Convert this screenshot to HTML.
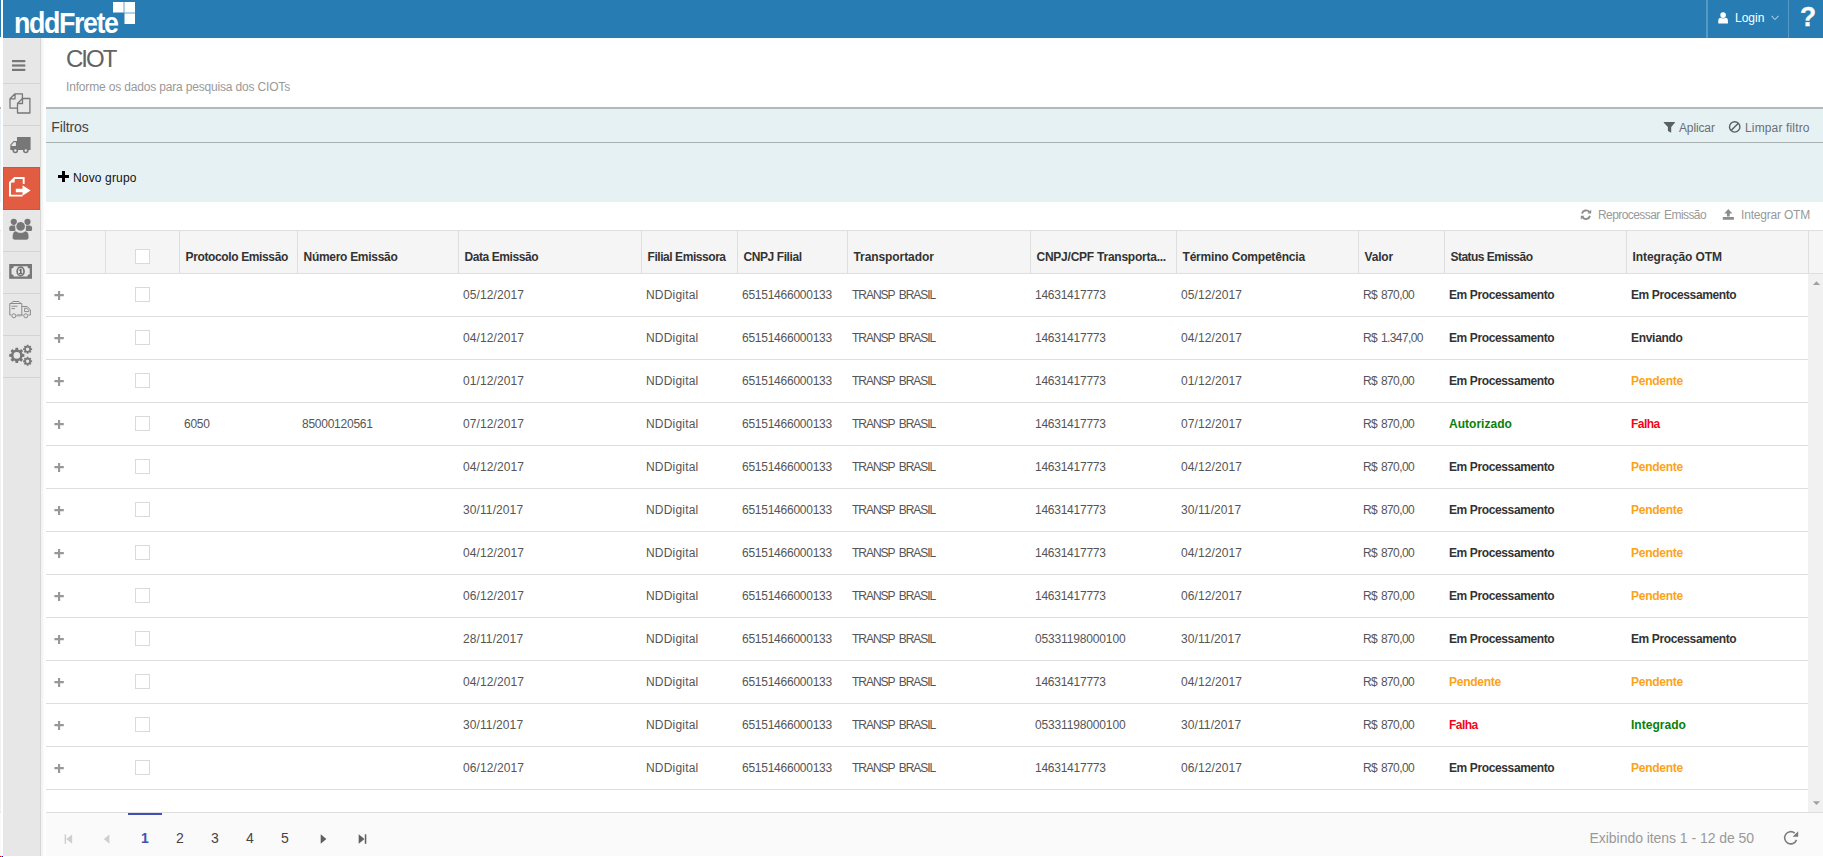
<!DOCTYPE html>
<html lang="pt-BR">
<head>
<meta charset="utf-8">
<title>nddFrete - CIOT</title>
<style>
*{box-sizing:border-box}
html,body{margin:0;padding:0}
body{width:1823px;height:857px;overflow:hidden;background:#fff;font-family:"Liberation Sans",sans-serif;font-size:12px;color:#555;position:relative}
.abs{position:absolute}
#edge{left:0;top:0;width:1px;height:857px;background:linear-gradient(to bottom,#277db3 0,#277db3 37px,#fff 37px,#fff 107px,#b4b8b9 107px,#b4b8b9 109px,#e6f1f4 109px,#e6f1f4 202px,#fff 202px,#fff 230px,#dedede 230px,#dedede 231px,#f5f5f5 231px,#f5f5f5 273px,#dedede 273px,#dedede 274px,#f1f1f1 274px,#f1f1f1 812px,#dedede 812px,#dedede 813px,#fafafa 813px,#fafafa 856px,#fff 856px)}
#topbar{left:3px;top:0;width:1820px;height:38px;background:#277db3}
#logo{left:11.4px;top:6px;font-size:29px;font-weight:bold;color:#fff;letter-spacing:-1.5px;line-height:34px;white-space:nowrap;transform:scaleX(.925);transform-origin:0 0}
#sq{left:110px;top:2px}
.tdiv{top:0;width:1px;height:38px;background:rgba(255,255,255,.22)}
#login{left:1732px;top:1px;line-height:35px;color:#fff;font-size:12px}
#help{left:1792px;top:0;width:26px;text-align:center;color:#fff;font-weight:bold;font-size:28px;line-height:33px;transform:scaleX(.94);-webkit-text-stroke:.35px #fff}
#side{left:3px;top:38px;width:38px;height:818px;background:#e7e7e7;border-right:1px solid #d5d7d3}
.sd{position:absolute;left:0;width:37px;height:1px;background:#d3d5d1}
#sact{left:0;top:129px;width:37px;height:43px;background:#e25c41;border:1px solid #e34f2e}
#sicons{left:0;top:0}
#shadow{left:41px;top:38px;width:4px;height:818px;background:linear-gradient(to right,rgba(0,0,0,.055),rgba(0,0,0,0))}
h1{margin:0;font-weight:normal;font-size:24px;color:#636363;left:66px;top:45px;line-height:28px;letter-spacing:-2px}
#sub{left:66px;top:79px;color:#999;font-size:12px;line-height:16px;white-space:nowrap;letter-spacing:-.17px}
#filt{left:46px;top:107px;width:1777px;height:95px;background:#e6f1f4;border-top:2px solid #b4b8b9}
#filthead{left:0;top:0;width:100%;height:34px;border-bottom:1px solid #a9b0b2}
#filtt{left:5.3px;top:9px;font-size:14px;color:#444;line-height:18px;letter-spacing:-.12px}
.fbtn{top:11px;font-size:12px;color:#6a7072;line-height:16px;white-space:nowrap}
#novo{left:27px;top:61px;color:#111;font-size:12px;line-height:16px;white-space:nowrap;letter-spacing:.15px}
.tb{top:207px;color:#999;font-size:12px;line-height:16px;white-space:nowrap}
#grid{left:46px;top:230px;width:1777px;height:582px;border-top:1px solid #dedede}
#ghead{left:0;top:0;width:1777px;height:43px;background:#f5f5f5;border-bottom:1px solid #dedede}
table{border-collapse:separate;border-spacing:0;table-layout:fixed;width:1762px}
th{height:42px;padding:9px 0 0 5.5px;text-align:left;font-weight:bold;font-size:12px;color:#333;border-left:1px solid #dedede;white-space:nowrap;overflow:hidden}
th:first-child{border-left:0}
td{height:43px;padding:0 0 0 5px;font-size:12px;color:#555;border-bottom:1px solid #dedede;white-space:nowrap;overflow:hidden}
td.st{font-weight:bold;color:#333}
td.pen{color:#fba31a}
td.err{color:#f4051a}
td.ok{color:#0a800a}

th:nth-child(3){letter-spacing:-.37px}th:nth-child(4){letter-spacing:-.29px}th:nth-child(5){letter-spacing:-.43px}
th:nth-child(6){letter-spacing:-.44px}th:nth-child(7){letter-spacing:-.42px}th:nth-child(8){letter-spacing:-.08px}
th:nth-child(9){letter-spacing:-.24px}th:nth-child(10){letter-spacing:-.19px}th:nth-child(11){letter-spacing:-.16px}
th:nth-child(12){letter-spacing:-.53px}th:nth-child(13){letter-spacing:-.09px}
td:nth-child(3),td:nth-child(4),td:nth-child(7),td:nth-child(9){letter-spacing:-.25px}
td:nth-child(8){letter-spacing:-1.02px;word-spacing:2px}td:nth-child(11){letter-spacing:-.62px;word-spacing:1.2px}
td:nth-child(5),td:nth-child(10){letter-spacing:.1px}td:nth-child(6){letter-spacing:.2px}
td.w{letter-spacing:-.15px}
td.st{letter-spacing:-.38px}
td.l1{letter-spacing:-.3px}td.l2{letter-spacing:-.25px}td.l3{letter-spacing:.02px}td.l4{letter-spacing:-.55px}
.cb{position:absolute;left:30px;top:13px;width:15px;height:15px;border:1px solid #dadada;background:#fff}
td.ck,th.ck{position:relative}
th .cb{left:29px;top:18px}
#gbody{left:0;top:43px;width:1762px}
#scroll{left:1762px;top:43px;width:15px;height:538px;background:#f1f1f1}
#pager{left:46px;top:812px;width:1777px;height:44px;background:#fafafa;border-top:1px solid #dedede}
.pn{position:absolute;top:15.5px;width:34px;text-align:center;font-size:14px;color:#444;line-height:18px}
.pn.cur{color:#3f51b5;font-weight:bold}
#curbar{left:82px;top:0;width:34px;height:2px;background:#3f51b5}
#pinfo{right:69px;top:16px;font-size:14px;color:#999;line-height:18px;white-space:nowrap;letter-spacing:-.05px}
</style>
</head>
<body>
<div id="edge" class="abs"></div>
<div class="abs" style="left:0;top:856px;width:1px;height:1px;background:#f00"></div><div class="abs" style="left:1px;top:856px;width:1px;height:1px;background:#0f0"></div><div class="abs" style="left:2px;top:856px;width:1px;height:1px;background:#00f"></div>
<div id="topbar" class="abs">
  <div id="logo" class="abs">nddFrete</div>
  <svg id="sq" class="abs" width="24" height="24" viewBox="0 0 24 24"><rect x="0" y="0" width="10.5" height="10.5" fill="#fff"/><rect x="11.5" y="0" width="10.5" height="10.5" fill="#fff"/><rect x="11.5" y="11.5" width="10.5" height="10.5" fill="#fff"/><rect x="10.5" y="0" width="1" height="10.5" fill="#cfe3ef"/><rect x="11.5" y="10.5" width="10.5" height="1" fill="#cfe3ef"/></svg>
  <div class="abs tdiv" style="left:1703px;width:2px"></div>
  <div class="abs tdiv" style="left:1785px"></div>
  <svg class="abs" style="left:1714.8px;top:12.3px" width="10.2" height="11.5" viewBox="0 0 11 12" preserveAspectRatio="none"><circle cx="5.5" cy="3.2" r="3" fill="#fff"/><path d="M0.3 12 V9 Q0.3 6.2 3 6 Q5.5 7.6 8 6 Q10.7 6.2 10.7 9 V12 Z" fill="#fff"/></svg>
  <div id="login" class="abs">Login</div>
  <svg class="abs" style="left:1767.6px;top:15.3px" width="8" height="6" viewBox="0 0 8 6"><path d="M0.5 0.8 L4 4.6 L7.5 0.8" fill="none" stroke="#d5e6f1" stroke-width="1"/></svg>
  <div id="help" class="abs">?</div>
</div>
<div id="side" class="abs">
  <div class="sd" style="top:45px"></div>
  <div class="sd" style="top:87px"></div>
  <div class="sd" style="top:129px"></div>
  <div class="sd" style="top:171px"></div>
  <div class="sd" style="top:213px"></div>
  <div class="sd" style="top:255px"></div>
  <div class="sd" style="top:297px"></div>
  <div class="sd" style="top:339px"></div>
  <div id="sact" class="abs"></div>
  <svg id="sicons" class="abs" width="38" height="342" viewBox="3 38 38 342">
    <g fill="#777">
      <rect x="12" y="60" width="13.3" height="2.2"/><rect x="12" y="64.4" width="13.3" height="2.2"/><rect x="12" y="68.8" width="13.3" height="2.2"/>
    </g>
    <g fill="none" stroke="#777" stroke-width="1.3" stroke-linejoin="round">
      <path d="M15 93.8 H22.4 V108.2 H10 V98.8 Z M15 93.8 V98.8 H10"/>
      <path d="M22.5 98.5 H29.9 V113 H17.5 V103.5 Z" fill="#e7e7e7"/><path d="M22.5 98.5 V103.5 H17.5"/>
    </g>
    <g fill="#777">
      <path d="M17 137 H30.6 V150 H10.3 V144.8 L13.6 141.1 H17 Z M15.9 142.2 H14 L11.5 145 V146 H15.9 Z"/>
      <circle cx="15.3" cy="150.5" r="2.8"/><circle cx="25.8" cy="150.5" r="2.8"/>
    </g>
    <circle cx="15.3" cy="150.5" r="1.2" fill="#e7e7e7"/><circle cx="25.8" cy="150.5" r="1.2" fill="#e7e7e7"/>
    <g fill="none" stroke="#fff" stroke-width="1.9">
      <path d="M23.7 184 V178 H14.6 L10 182.6 V195.6 H22.6"/>
    </g>
    <path d="M14.6 178 V182.6 H10 Z" fill="#fff"/>
    <path d="M15.8 188.8 H22.5 V185.2 L30.6 190.5 L22.5 195.8 V192.2 H15.8 Z" fill="#fff"/>
    <g fill="#777">
      <circle cx="13.8" cy="221.8" r="3.1"/><circle cx="27.5" cy="221.8" r="3.1"/>
      <path d="M9.2 229.6 V228.2 Q9.2 225.6 11.8 225.6 H15.4 V231.1 H10.7 Q9.2 231.1 9.2 229.6 Z M32.1 229.6 V228.2 Q32.1 225.6 29.5 225.6 H25.8 V231.1 H30.6 Q32.1 231.1 32.1 229.6 Z"/>
      <circle cx="20.6" cy="226.4" r="5.2" fill="#e7e7e7"/>
      <circle cx="20.6" cy="226.4" r="4.3"/>
      <path d="M12.3 237.6 Q12.3 231 15.8 231 Q20.6 234.4 25.4 231 Q28.9 231 28.9 237.6 Q28.9 240 26.5 240 H14.7 Q12.3 240 12.3 237.6 Z" stroke="#e7e7e7" stroke-width="0.6"/>
    </g>
    <g>
      <rect x="9.2" y="264" width="22.8" height="14.8" fill="#777"/>
      <path d="M13.8 266.3 H27.4 A2.3 2.3 0 0 0 29.7 268.6 V274.2 A2.3 2.3 0 0 0 27.4 276.5 H13.8 A2.3 2.3 0 0 0 11.5 274.2 V268.6 A2.3 2.3 0 0 0 13.8 266.3 Z" fill="#e7e7e7"/>
      <ellipse cx="20.6" cy="271.4" rx="4.3" ry="5.1" fill="#777"/>
      <ellipse cx="20.6" cy="271.4" rx="2.5" ry="3.3" fill="#e7e7e7"/>
      <path d="M19.2 269.8 L20.4 268.8 H21.6 V272.9 H22.4 V274 H19 V272.9 H20 V270.5 L19.2 271 Z" fill="#6a6a6a"/>
    </g>
    <g fill="none" stroke="#8a8a8a" stroke-width="1">
      <path d="M9.8 303.5 H21.8 V315 H17 M11.4 315 H9.8 V303.5"/>
      <path d="M11 303.3 L13 301.5 H19 L20.8 303.3"/>
      <path d="M11.5 306.2 H17.5 M11.5 308.6 H15"/>
      <path d="M21.8 306.5 H27.2 L30.4 310 V315 H28.4 M23.2 315 H21.8"/>
      <path d="M24.6 308.3 H27 L28.8 310.6 V311.6 H24.6 Z"/>
      <circle cx="13.9" cy="315.8" r="2"/><circle cx="25.8" cy="315.8" r="2"/>
      <path d="M16.2 315.6 H21.6" stroke-width="1.6" stroke="#aaa"/>
    </g>
    <g fill="#777" fill-rule="evenodd">
      <path d="M22.39 353.87 L24.39 354.08 L24.39 356.72 L22.39 356.93 L21.84 358.27 L23.10 359.83 L21.23 361.70 L19.67 360.44 L18.33 360.99 L18.12 362.99 L15.48 362.99 L15.27 360.99 L13.93 360.44 L12.37 361.70 L10.50 359.83 L11.76 358.27 L11.21 356.93 L9.21 356.72 L9.21 354.08 L11.21 353.87 L11.76 352.53 L10.50 350.97 L12.37 349.10 L13.93 350.36 L15.27 349.81 L15.48 347.81 L18.12 347.81 L18.33 349.81 L19.67 350.36 L21.23 349.10 L23.10 350.97 L21.84 352.53Z M20.10 355.40 A3.3 3.3 0 1 0 13.50 355.40 A3.3 3.3 0 1 0 20.10 355.40Z"/>
      <path d="M30.86 348.23 L32.11 348.30 L32.11 350.10 L30.86 350.17 L30.59 350.81 L31.42 351.76 L30.16 353.02 L29.21 352.19 L28.57 352.46 L28.50 353.71 L26.70 353.71 L26.63 352.46 L25.99 352.19 L25.04 353.02 L23.78 351.76 L24.61 350.81 L24.34 350.17 L23.09 350.10 L23.09 348.30 L24.34 348.23 L24.61 347.59 L23.78 346.64 L25.04 345.38 L25.99 346.21 L26.63 345.94 L26.70 344.69 L28.50 344.69 L28.57 345.94 L29.21 346.21 L30.16 345.38 L31.42 346.64 L30.59 347.59Z M29.30 349.20 A1.7 1.7 0 1 0 25.90 349.20 A1.7 1.7 0 1 0 29.30 349.20Z"/>
      <path d="M30.86 360.33 L32.11 360.40 L32.11 362.20 L30.86 362.27 L30.59 362.91 L31.42 363.86 L30.16 365.12 L29.21 364.29 L28.57 364.56 L28.50 365.81 L26.70 365.81 L26.63 364.56 L25.99 364.29 L25.04 365.12 L23.78 363.86 L24.61 362.91 L24.34 362.27 L23.09 362.20 L23.09 360.40 L24.34 360.33 L24.61 359.69 L23.78 358.74 L25.04 357.48 L25.99 358.31 L26.63 358.04 L26.70 356.79 L28.50 356.79 L28.57 358.04 L29.21 358.31 L30.16 357.48 L31.42 358.74 L30.59 359.69Z M29.30 361.30 A1.7 1.7 0 1 0 25.90 361.30 A1.7 1.7 0 1 0 29.30 361.30Z"/>
    </g>
  </svg>
</div>
<div id="shadow" class="abs"></div>
<h1 class="abs">CIOT</h1>
<div id="sub" class="abs">Informe os dados para pesquisa dos CIOTs</div>
<div id="filt" class="abs">
  <div id="filthead" class="abs">
    <div id="filtt" class="abs">Filtros</div>
    <div class="abs fbtn" style="left:1633px;letter-spacing:-.13px">Aplicar</div>
    <div class="abs fbtn" style="left:1699px;letter-spacing:.15px">Limpar filtro</div>
  </div>
  <div id="novo" class="abs">Novo grupo</div>
</div>
<div class="abs tb" style="left:1598px;letter-spacing:-.57px;word-spacing:1.5px">Reprocessar Emissão</div>
<div class="abs tb" style="left:1741px;letter-spacing:-.19px">Integrar OTM</div>
<div id="grid" class="abs">
  <div id="ghead" class="abs">
    <table><colgroup><col style="width:59px"><col style="width:74px"><col style="width:118px"><col style="width:161px"><col style="width:183px"><col style="width:96px"><col style="width:110px"><col style="width:183px"><col style="width:146px"><col style="width:182px"><col style="width:86px"><col style="width:182px"><col style="width:182px"></colgroup>
    <tr><th></th><th class="ck"><span class="cb"></span></th><th>Protocolo Emissão</th><th>Número Emissão</th><th>Data Emissão</th><th>Filial Emissora</th><th>CNPJ Filial</th><th>Transportador</th><th>CNPJ/CPF Transporta...</th><th>Término Competência</th><th>Valor</th><th>Status Emissão</th><th>Integração OTM</th></tr></table>
  </div>
  <div id="gbody" class="abs">
    <table><colgroup><col style="width:59px"><col style="width:74px"><col style="width:118px"><col style="width:161px"><col style="width:183px"><col style="width:96px"><col style="width:110px"><col style="width:183px"><col style="width:146px"><col style="width:182px"><col style="width:86px"><col style="width:182px"><col style="width:182px"></colgroup>
<tr><td class="ex"></td><td class="ck"><span class="cb"></span></td><td></td><td></td><td>05/12/2017</td><td>NDDigital</td><td>65151466000133</td><td>TRANSP BRASIL</td><td>14631417773</td><td>05/12/2017</td><td>R$ 870,00</td><td class="st">Em Processamento</td><td class="st">Em Processamento</td></tr>
<tr><td class="ex"></td><td class="ck"><span class="cb"></span></td><td></td><td></td><td>04/12/2017</td><td>NDDigital</td><td>65151466000133</td><td>TRANSP BRASIL</td><td>14631417773</td><td>04/12/2017</td><td>R$ 1.347,00</td><td class="st">Em Processamento</td><td class="st l1">Enviando</td></tr>
<tr><td class="ex"></td><td class="ck"><span class="cb"></span></td><td></td><td></td><td>01/12/2017</td><td>NDDigital</td><td>65151466000133</td><td>TRANSP BRASIL</td><td>14631417773</td><td>01/12/2017</td><td>R$ 870,00</td><td class="st">Em Processamento</td><td class="st pen l2">Pendente</td></tr>
<tr><td class="ex"></td><td class="ck"><span class="cb"></span></td><td>6050</td><td>85000120561</td><td>07/12/2017</td><td>NDDigital</td><td>65151466000133</td><td>TRANSP BRASIL</td><td>14631417773</td><td>07/12/2017</td><td>R$ 870,00</td><td class="st ok l3">Autorizado</td><td class="st err l4">Falha</td></tr>
<tr><td class="ex"></td><td class="ck"><span class="cb"></span></td><td></td><td></td><td>04/12/2017</td><td>NDDigital</td><td>65151466000133</td><td>TRANSP BRASIL</td><td>14631417773</td><td>04/12/2017</td><td>R$ 870,00</td><td class="st">Em Processamento</td><td class="st pen l2">Pendente</td></tr>
<tr><td class="ex"></td><td class="ck"><span class="cb"></span></td><td></td><td></td><td>30/11/2017</td><td>NDDigital</td><td>65151466000133</td><td>TRANSP BRASIL</td><td>14631417773</td><td>30/11/2017</td><td>R$ 870,00</td><td class="st">Em Processamento</td><td class="st pen l2">Pendente</td></tr>
<tr><td class="ex"></td><td class="ck"><span class="cb"></span></td><td></td><td></td><td>04/12/2017</td><td>NDDigital</td><td>65151466000133</td><td>TRANSP BRASIL</td><td>14631417773</td><td>04/12/2017</td><td>R$ 870,00</td><td class="st">Em Processamento</td><td class="st pen l2">Pendente</td></tr>
<tr><td class="ex"></td><td class="ck"><span class="cb"></span></td><td></td><td></td><td>06/12/2017</td><td>NDDigital</td><td>65151466000133</td><td>TRANSP BRASIL</td><td>14631417773</td><td>06/12/2017</td><td>R$ 870,00</td><td class="st">Em Processamento</td><td class="st pen l2">Pendente</td></tr>
<tr><td class="ex"></td><td class="ck"><span class="cb"></span></td><td></td><td></td><td>28/11/2017</td><td>NDDigital</td><td>65151466000133</td><td>TRANSP BRASIL</td><td class="w">05331198000100</td><td>30/11/2017</td><td>R$ 870,00</td><td class="st">Em Processamento</td><td class="st">Em Processamento</td></tr>
<tr><td class="ex"></td><td class="ck"><span class="cb"></span></td><td></td><td></td><td>04/12/2017</td><td>NDDigital</td><td>65151466000133</td><td>TRANSP BRASIL</td><td>14631417773</td><td>04/12/2017</td><td>R$ 870,00</td><td class="st pen l2">Pendente</td><td class="st pen l2">Pendente</td></tr>
<tr><td class="ex"></td><td class="ck"><span class="cb"></span></td><td></td><td></td><td>30/11/2017</td><td>NDDigital</td><td>65151466000133</td><td>TRANSP BRASIL</td><td class="w">05331198000100</td><td>30/11/2017</td><td>R$ 870,00</td><td class="st err l4">Falha</td><td class="st ok l3">Integrado</td></tr>
<tr><td class="ex"></td><td class="ck"><span class="cb"></span></td><td></td><td></td><td>06/12/2017</td><td>NDDigital</td><td>65151466000133</td><td>TRANSP BRASIL</td><td>14631417773</td><td>06/12/2017</td><td>R$ 870,00</td><td class="st">Em Processamento</td><td class="st pen l2">Pendente</td></tr>
    </table>
  </div>
  <div id="scroll" class="abs"></div>
  <div class="abs" style="left:1762px;top:0;width:1px;height:42px;background:#dedede"></div>
</div>
<div id="pager" class="abs">
  <div id="curbar" class="abs"></div>
  <div class="pn cur" style="left:82px">1</div>
  <div class="pn" style="left:117px">2</div>
  <div class="pn" style="left:152px">3</div>
  <div class="pn" style="left:187px">4</div>
  <div class="pn" style="left:222px">5</div>
  <div id="pinfo" class="abs">Exibindo itens 1 - 12 de 50</div>
</div>
<svg id="icons" class="abs" width="1823" height="857" viewBox="0 0 1823 857" style="left:0;top:0;pointer-events:none">
  <path d="M1663.8 122 H1674.9 V122.8 L1671.2 126.9 V132.8 L1667.9 130.9 V126.9 L1663.8 122.8 Z" fill="#5a6062"/>
  <g fill="none" stroke="#5a6062" stroke-width="1.4"><circle cx="1734.7" cy="126.9" r="5.2"/><path d="M1731 130.6 L1738.4 123.2"/></g>
  <path d="M54.4 294.1H58V291.1h2.15V294.1H63.8v2.2H60.15V300.0H58V296.3H54.4ZM54.4 337.1H58V334.1h2.15V337.1H63.8v2.2H60.15V343.0H58V339.3H54.4ZM54.4 380.1H58V377.1h2.15V380.1H63.8v2.2H60.15V386.0H58V382.3H54.4ZM54.4 423.1H58V420.1h2.15V423.1H63.8v2.2H60.15V429.0H58V425.3H54.4ZM54.4 466.1H58V463.1h2.15V466.1H63.8v2.2H60.15V472.0H58V468.3H54.4ZM54.4 509.1H58V506.1h2.15V509.1H63.8v2.2H60.15V515.0H58V511.3H54.4ZM54.4 552.1H58V549.1h2.15V552.1H63.8v2.2H60.15V558.0H58V554.3H54.4ZM54.4 595.1H58V592.1h2.15V595.1H63.8v2.2H60.15V601.0H58V597.3H54.4ZM54.4 638.1H58V635.1h2.15V638.1H63.8v2.2H60.15V644.0H58V640.3H54.4ZM54.4 681.1H58V678.1h2.15V681.1H63.8v2.2H60.15V687.0H58V683.3H54.4ZM54.4 724.1H58V721.1h2.15V724.1H63.8v2.2H60.15V730.0H58V726.3H54.4ZM54.4 767.1H58V764.1h2.15V767.1H63.8v2.2H60.15V773.0H58V769.3H54.4Z" fill="#989898"/>
  <path d="M58 175 H62 V171 H65 V175 H69 V178 H65 V182 H62 V178 H58 Z" fill="#000"/>
  <g fill="none" stroke="#8c8c8c" stroke-width="1.9">
    <path d="M1582 213.6 A4.2 4.2 0 0 1 1589.4 212"/>
    <path d="M1590 215.8 A4.2 4.2 0 0 1 1582.6 217.4"/>
  </g>
  <path d="M1591.2 209.8 V213.6 H1587.4 Z M1580.8 219.6 V215.8 H1584.6 Z" fill="#8c8c8c"/>
  <path d="M1728.3 209 L1732.3 213.5 H1729.7 V216.6 H1726.9 V213.5 H1724.3 Z M1722.8 217 H1733.9 V219.7 H1722.8 Z" fill="#8c8c8c"/>
  <g fill="#cfcfcf">
    <rect x="64.6" y="834.4" width="1.5" height="9.4"/><path d="M72.1 834.4 V843.8 L66.3 839.1 Z"/>
    <path d="M109.4 834.4 V843.8 L103.8 839.1 Z"/>
  </g>
  <g fill="#606060">
    <path d="M320.7 834.3 V843.8 L326.4 839.05 Z"/>
    <path d="M358.7 834.3 V843.8 L364.5 839.05 Z"/><rect x="364.8" y="834.3" width="1.5" height="9.5"/>
  </g>
  <path d="M1812.9 285 L1816.5 281.2 L1820.1 285 Z M1812.9 801.2 L1816.5 805 L1820.1 801.2 Z" fill="#a0a0a0"/>
  <g fill="none" stroke="#7c7c7c" stroke-width="1.6">
    <path d="M1794.7 833.1 A6.1 6.1 0 1 0 1796.5 839.9"/>
  </g>
  <path d="M1798.2 831.2 V836.8 H1792.6 Z" fill="#7a7a7a"/>
</svg>
</body>
</html>
